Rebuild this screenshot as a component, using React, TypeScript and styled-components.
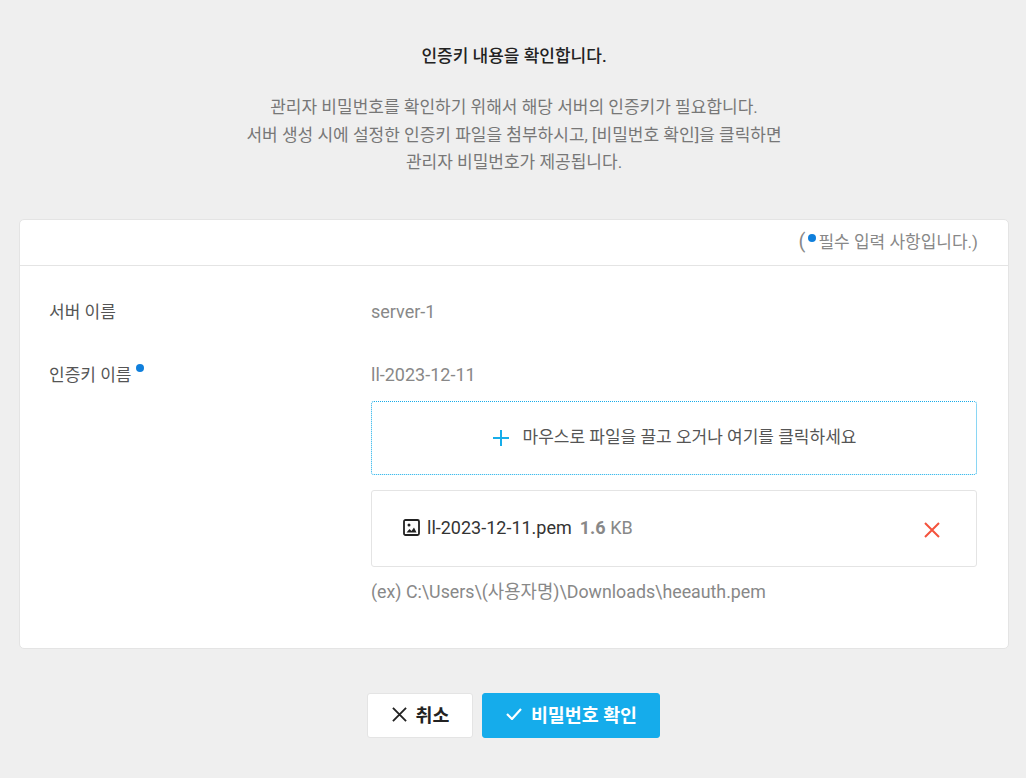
import React from "react";
import styled, { createGlobalStyle } from "styled-components";

const GlobalStyle = createGlobalStyle`
  html, body {
    margin: 0;
    padding: 0;
    background: #efefef;
  }
  body {
    font-family: Roboto, "Noto Sans CJK KR", sans-serif;
    font-size: 17px;
    color: #333;
  }
`;

const Page = styled.div`
  width: 1026px;
  height: 778px;
  padding: 46px 17px 0 19px;
  box-sizing: border-box;
  overflow: hidden;
`;

const Intro = styled.div`
  text-align: center;
  margin-bottom: 42px;
`;

const Title = styled.h1`
  margin: 0 0 28px;
  font-size: 17px;
  line-height: 20px;
  font-weight: 500;
  color: #222;
`;

const Description = styled.p`
  margin: 0;
  font-size: 17px;
  line-height: 27.5px;
  color: #777;
`;

const Card = styled.section`
  width: 990px;
  height: 430px;
  box-sizing: border-box;
  background: #fff;
  border: 1px solid #e4e4e4;
  border-radius: 5px;
`;

const CardHeader = styled.div`
  height: 42px;
  padding: 0 30px 3px 0;
  display: flex;
  justify-content: flex-end;
  align-items: center;
  border-bottom: 1px solid #e4e4e4;
  color: #888;
  font-size: 17px;
`;

const Paren = styled.span`
  font-size: 20px;
  line-height: 1;
`;

const Dot = styled.i<{ $left?: number; $right?: number; $raise?: number }>`
  display: inline-block;
  width: 8px;
  height: 8px;
  border-radius: 50%;
  background: #0f7fdc;
  vertical-align: ${(p) => p.$raise ?? 6}px;
  margin-left: ${(p) => p.$left ?? 0}px;
  margin-right: ${(p) => p.$right ?? 0}px;
`;

const CardBody = styled.div`
  padding: 33px 31px 0 29px;
`;

const Row = styled.div`
  display: flex;
  margin-bottom: 37px;
`;

const Label = styled.div`
  width: 322px;
  flex: none;
  line-height: 26px;
  color: #555;
`;

const Value = styled.div`
  flex: 1;
  min-width: 0;
`;

const Static = styled.div`
  font-size: 18px;
  line-height: 26px;
  color: #888;
`;

const DropZone = styled.div`
  height: 74px;
  margin-top: 13px;
  box-sizing: border-box;
  display: flex;
  align-items: center;
  justify-content: center;
  gap: 14px;
  padding-left: 1px;
  border: 1px dotted #17ade9;
  border-radius: 3px;
  color: #555;
`;

const DropText = styled.span`
  margin-bottom: 5px;
`;

const FileBox = styled.div`
  height: 77px;
  margin-top: 15px;
  box-sizing: border-box;
  display: flex;
  align-items: center;
  padding: 0 36px 0 31px;
  border: 1px solid #e4e4e4;
  border-radius: 3px;
  font-size: 18px;
`;

const FileName = styled.span`
  margin-left: 7px;
  color: #333;
`;

const FileSize = styled.span`
  margin-left: 8px;
  color: #888;
  b {
    font-weight: 700;
  }
`;

const FileInfo = styled.div`
  flex: 1;
  display: flex;
  align-items: center;
  margin-bottom: 1px;
`;

const RemoveMark = styled.span`
  display: flex;
  margin-top: 3px;
`;

const Hint = styled.div`
  margin-top: 12px;
  font-size: 17.8px;
  line-height: 26px;
  color: #888;
`;

const Actions = styled.div`
  display: flex;
  justify-content: center;
  gap: 9px;
  margin-top: 44px;
  padding-right: 2px;
`;

const Button = styled.button<{ $primary?: boolean }>`
  height: 45px;
  box-sizing: border-box;
  display: flex;
  align-items: center;
  justify-content: center;
  gap: 9px;
  padding: 0 0 2px 2px;
  width: ${(p) => (p.$primary ? 178 : 106)}px;
  border: 1px solid ${(p) => (p.$primary ? "#15aceb" : "#e4e4e4")};
  border-radius: 3px;
  background: ${(p) => (p.$primary ? "#15aceb" : "#fff")};
  color: ${(p) => (p.$primary ? "#fff" : "#222")};
  font-family: inherit;
  font-size: 18.4px;
  font-weight: 700;
`;

const PlusIcon = () => (
  <svg width="16" height="16" viewBox="0 0 16 16" fill="none" stroke="#17ade9" strokeWidth="2">
    <path d="M8 0v16M0 8h16" />
  </svg>
);

const CrossIcon = ({ color, size }: { color: string; size: number }) => (
  <svg width={size} height={size} viewBox="0 0 16 16" fill="none" stroke={color} strokeWidth="2">
    <path d="M1 1l14 14M15 1L1 15" />
  </svg>
);

const CheckIcon = () => (
  <svg width="16" height="12" viewBox="0 0 16 12" fill="none" stroke="#fff" strokeWidth="2.2">
    <path d="M1 6l5 5 9-10" />
  </svg>
);

const ImageIcon = () => (
  <svg width="17" height="17" viewBox="0 0 17 17">
    <rect x="1" y="1" width="15" height="15" rx="1.5" fill="none" stroke="#222" strokeWidth="1.8" />
    <circle cx="6" cy="6" r="1.5" fill="#222" />
    <path d="M3.5 13.5l3-3.5 2 2 2.5-3.5 2.5 5z" fill="#222" />
  </svg>
);

export default function App() {
  return (
    <>
      <GlobalStyle />
      <Page>
        <Intro>
          <Title>인증키 내용을 확인합니다.</Title>
          <Description>
            관리자 비밀번호를 확인하기 위해서 해당 서버의 인증키가 필요합니다.
            <br />
            서버 생성 시에 설정한 인증키 파일을 첨부하시고, [비밀번호 확인]을 클릭하면
            <br />
            관리자 비밀번호가 제공됩니다.
          </Description>
        </Intro>
        <Card>
          <CardHeader>
            <span>
              <Paren>(</Paren>
              <Dot $left={3} $right={2} $raise={6} />필수 입력 사항입니다.)
            </span>
          </CardHeader>
          <CardBody>
            <Row>
              <Label>서버 이름</Label>
              <Value>
                <Static>server-1</Static>
              </Value>
            </Row>
            <Row>
              <Label>
                인증키 이름
                <Dot $left={5} $raise={9} />
              </Label>
              <Value>
                <Static>ll-2023-12-11</Static>
                <DropZone>
                  <PlusIcon />
                  <DropText>마우스로 파일을 끌고 오거나 여기를 클릭하세요</DropText>
                </DropZone>
                <FileBox>
                  <FileInfo>
                    <ImageIcon />
                    <FileName>ll-2023-12-11.pem</FileName>
                    <FileSize>
                      <b>1.6</b> KB
                    </FileSize>
                  </FileInfo>
                  <RemoveMark>
                    <CrossIcon color="#f4533d" size={16} />
                  </RemoveMark>
                </FileBox>
                <Hint>(ex) C:\Users\(사용자명)\Downloads\heeauth.pem</Hint>
              </Value>
            </Row>
          </CardBody>
        </Card>
        <Actions>
          <Button>
            <CrossIcon color="#222" size={15} />
            취소
          </Button>
          <Button $primary>
            <CheckIcon />
            비밀번호 확인
          </Button>
        </Actions>
      </Page>
    </>
  );
}
